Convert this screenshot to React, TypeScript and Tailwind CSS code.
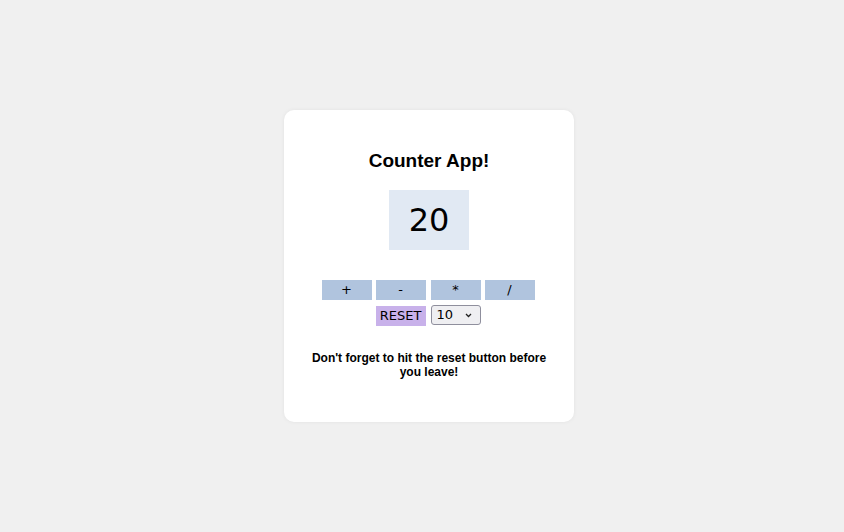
import { useState } from "react";

export default function App() {
  const [count, setCount] = useState(20);
  const [step, setStep] = useState(10);

  const btn =
    "h-5 w-[50px] bg-[#b0c4de] text-[13px] leading-5 text-black [font-family:'DejaVu_Sans',sans-serif]";

  return (
    <div className="flex min-h-screen items-center justify-center bg-[#f0f0f0] pl-[14px] [font-family:'Liberation_Sans',Arial,sans-serif]">
      <div className="flex h-[312px] w-[290px] flex-col items-center rounded-[10px] bg-white px-5 pt-[39px] shadow-[0_0_4px_rgba(0,0,0,0.06)]">
        <h1 className="text-[19px] font-bold leading-6 text-black">Counter App!</h1>

        <div className="mt-[17px] flex h-[60px] w-[80px] items-center justify-center bg-[#e1e9f3] text-[32px] text-black [font-family:'DejaVu_Sans',sans-serif]">
          {count}
        </div>

        {/* Buttons */}
        <div className="-ml-[2px] mt-[30px] flex gap-1">
          <button className={btn} onClick={() => setCount((c) => c + step)}>+</button>
          <button className={btn} onClick={() => setCount((c) => c - step)}>-</button>
          <button className={`${btn} ml-[1px]`} onClick={() => setCount((c) => c * step)}>*</button>
          <button className={btn} onClick={() => setCount((c) => c / step)}>/</button>
        </div>

        <div className="-ml-[2px] mt-1.5 flex h-5 items-start gap-[5px]">
          <button
            className="h-5 w-[50px] bg-[#c8b1ea] text-[13px] leading-5 text-black [font-family:'DejaVu_Sans',sans-serif]"
            onClick={() => setCount(0)}
          >
            RESET
          </button>
          <div className="relative -mt-px h-5 w-[50px]">
            <select
              value={step}
              onChange={(e) => setStep(Number(e.target.value))}
              className="box-border block h-5 w-[50px] appearance-none rounded-[3px] border border-[#8f8f9d] bg-[#efeff2] py-0 pl-[5px] text-[13px] leading-[18px] text-black [font-family:'DejaVu_Sans',sans-serif]"
            >
              <option value={1}>1</option>
              <option value={5}>5</option>
              <option value={10}>10</option>
            </select>
            <svg className="pointer-events-none absolute right-[9px] top-[8px]" width="7" height="5" viewBox="0 0 7 5" fill="none">
              <path d="M1 1l2.5 2.5L6 1" stroke="#222" strokeWidth="1.3" />
            </svg>
          </div>
        </div>

        <p className="mt-[25px] w-[250px] text-center text-[12px] font-bold leading-[14px] text-black">
          Don&apos;t forget to hit the reset button before you leave!
        </p>
      </div>
    </div>
  );
}
